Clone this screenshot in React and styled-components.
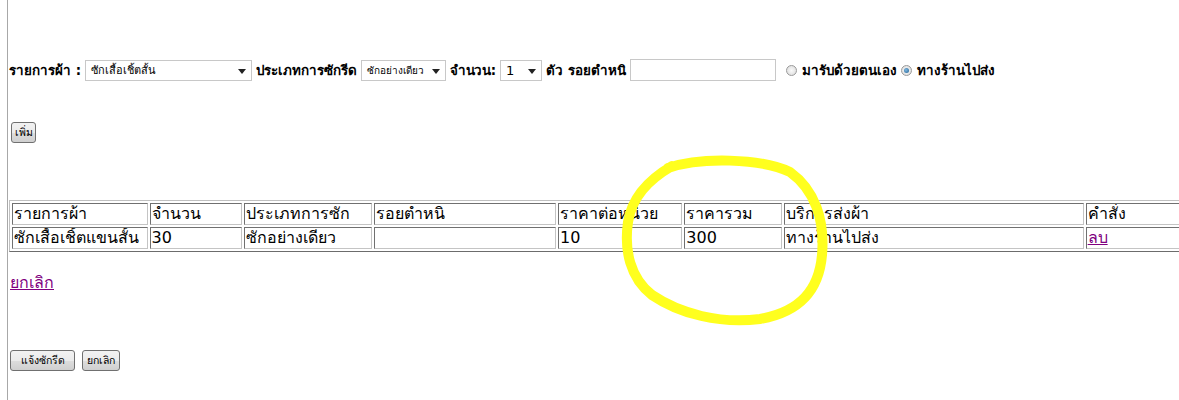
import React from "react";
import styled, { createGlobalStyle } from "styled-components";

const Global = createGlobalStyle`
  html, body { margin: 0; padding: 0; background: #fff; }
  body { font-family: Tahoma, "DejaVu Sans", "Noto Sans", sans-serif; color: #000; }
`;

const Page = styled.div`
  position: relative;
  width: 1179px;
  height: 400px;
  overflow: hidden;
`;

const Frame = styled.div`
  margin-left: 7px;
  border-left: 1px solid #a8a8a8;
  height: 400px;
  padding-left: 1px;
  display: flex;
  flex-direction: column;
`;

const FormRow = styled.div`
  display: flex;
  align-items: center;
  gap: 4px;
  margin-top: 59px;
  height: 22px;
  white-space: nowrap;
`;

const Label = styled.span`
  font-size: 13.4px;
  font-weight: bold;
  margin-left: ${(p) => p.$ml || 0}px;
  letter-spacing: ${(p) => p.$ls || 0}px;
`;

const SelectBox = styled.div`
  position: relative;
  box-sizing: border-box;
  width: ${(p) => p.$w}px;
  height: 21px;
  border: 1px solid #c8c8c8;
  background: #fff;
  font-size: ${(p) => p.$fs || 11}px;
  line-height: 19px;
  padding-left: 5px;
  &::after {
    content: "";
    position: absolute;
    right: 5px;
    top: 8px;
    border-left: 4px solid transparent;
    border-right: 4px solid transparent;
    border-top: 5px solid #222;
  }
`;

const TextBox = styled.div`
  box-sizing: border-box;
  width: 146px;
  height: 22px;
  border: 1px solid #c8c8c8;
  background: #fff;
`;

const Radio = styled.span`
  box-sizing: border-box;
  display: inline-block;
  width: 11px;
  height: 11px;
  border-radius: 50%;
  border: 1px solid #9a9a9a;
  background: radial-gradient(circle, #fafafa 0%, #d8d8d8 100%);
  margin-left: ${(p) => p.$ml || 0}px;
  position: relative;
  &::after {
    content: "";
    display: ${(p) => (p.$checked ? "block" : "none")};
    position: absolute;
    left: 2px;
    top: 2px;
    width: 5px;
    height: 5px;
    border-radius: 50%;
    background: radial-gradient(circle at 40% 40%, #7fb8e0 0%, #1f5f92 100%);
  }
`;

const Button = styled.button`
  box-sizing: border-box;
  width: ${(p) => p.$w}px;
  height: 21px;
  padding: 0;
  font-family: Tahoma, "DejaVu Sans", "Noto Sans", sans-serif;
  font-size: 10.5px;
  color: #000;
  border: 1px solid #707070;
  border-radius: 3px;
  background: linear-gradient(#f2f2f2 0%, #ebebeb 50%, #dddddd 51%, #cfcfcf 100%);
  cursor: pointer;
`;

const AddRow = styled.div`
  margin-top: 40px;
  padding-left: 2px;
`;

const TableWrap = styled.div`
  margin-top: 57px;
`;

const Table = styled.table`
  border: 1px outset #c0c0c0;
  border-spacing: 2px;
  width: 1244px;
  table-layout: fixed;
  font-size: 16px;
`;

const Cell = styled.td`
  border: 1px inset #c4c4c4;
  padding: 0 1px;
  height: 20px;
  line-height: 20px;
  white-space: nowrap;
  overflow: hidden;
  vertical-align: middle;
`;

const Link = styled.a`
  color: #800080;
  text-decoration: underline;
  cursor: pointer;
  font-size: 16px;
`;

const CancelRow = styled.div`
  margin-top: 18px;
  padding-left: 1px;
`;

const BottomRow = styled.div`
  margin-top: 55px;
  display: flex;
  gap: 7px;
  padding-left: 1px;
`;

const Scribble = styled.svg`
  position: absolute;
  left: 0;
  top: 0;
  pointer-events: none;
`;

const cols = [132, 90, 125, 177, 121, 95, 292, 160];
const headers = ["รายการผ้า", "จำนวน", "ประเภทการซัก", "รอยตำหนิ", "ราคาต่อหน่วย", "ราคารวม", "บริการส่งผ้า", "คำสั่ง"];
const row = ["ซักเสื้อเชิ้ตแขนสั้น", "30", "ซักอย่างเดียว", "", "10", "300", "ทางร้านไปส่ง"];

export default function App() {
  return (
    <Page>
      <Global />
      <Frame>
        <FormRow>
          <Label>รายการผ้า :</Label>
          <SelectBox $w={167}>ซักเสื้อเชิ้ตสั้น</SelectBox>
          <Label>ประเภทการซักรีด</Label>
          <SelectBox $w={85} $fs={10}>ซักอย่างเดียว</SelectBox>
          <Label $ls={-0.3}>จำนวน:</Label>
          <SelectBox $w={42} $fs={13}>1</SelectBox>
          <Label>ตัว รอยตำหนิ</Label>
          <TextBox />
          <Radio $ml={6} />
          <Label $ml={1}>มารับด้วยตนเอง</Label>
          <Radio $checked />
          <Label $ml={1}>ทางร้านไปส่ง</Label>
        </FormRow>
        <AddRow>
          <Button $w={25}>เพิ่ม</Button>
        </AddRow>
        <TableWrap>
          <Table>
            <colgroup>
              {cols.map((w, i) => (
                <col key={i} style={{ width: w }} />
              ))}
            </colgroup>
            <tbody>
              <tr>
                {headers.map((h) => (
                  <Cell key={h}>{h}</Cell>
                ))}
              </tr>
              <tr>
                {row.map((c, i) => (
                  <Cell key={i}>{c}</Cell>
                ))}
                <Cell>
                  <Link>ลบ</Link>
                </Cell>
              </tr>
            </tbody>
          </Table>
        </TableWrap>
        <CancelRow>
          <Link>ยกเลิก</Link>
        </CancelRow>
        <BottomRow>
          <Button $w={65}>แจ้งซักรีด</Button>
          <Button $w={38}>ยกเลิก</Button>
        </BottomRow>
      </Frame>
      <Scribble width="1179" height="400" viewBox="0 0 1179 400">
        <path
          d="M 668 168 C 700 157, 760 158, 790 172 C 815 190, 825 220, 822 255 C 819 290, 800 312, 760 319 C 720 324, 680 314, 652 295 C 630 278, 624 250, 628 222 C 632 197, 648 180, 672 166"
          fill="none"
          stroke="#ffff1e"
          strokeWidth="10"
          strokeLinecap="round"
          strokeLinejoin="round"
        />
      </Scribble>
    </Page>
  );
}
